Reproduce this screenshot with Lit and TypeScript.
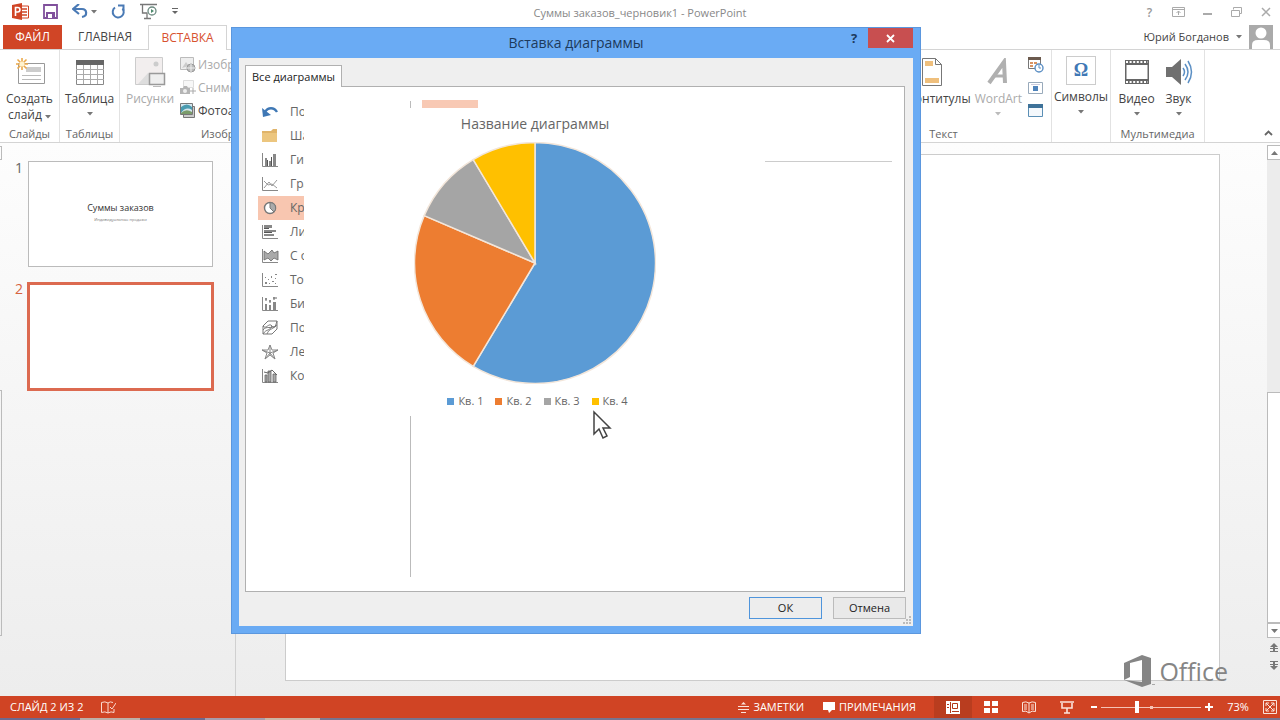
import { LitElement, html, css, svg } from "lit";
import { customElement, state } from "lit/decorators.js";

const chartTypes = [
  "Последние", "Шаблоны", "Гистограмма", "График", "Круговая", "Линейчатая",
  "С областями", "Точечная", "Биржевая", "Поверхность", "Лепестковая", "Комбинированная",
];

const series = [
  { name: "Кв. 1", value: 8.2, color: "#5b9bd5" },
  { name: "Кв. 2", value: 3.2, color: "#ed7d31" },
  { name: "Кв. 3", value: 1.4, color: "#a5a5a5" },
  { name: "Кв. 4", value: 1.2, color: "#ffc000" },
];

const axis = svg`<path d="M1.500 1v13.500H17" fill="none" stroke="#888"/>`;

const typeIcons = [
  svg`<path d="M4 8c3-5 9-5 12 0" fill="none" stroke="#3f78b5" stroke-width="2.400"/><path d="M1 4l1 9 8-2z" fill="#3f78b5"/>`,
  svg`<path d="M1 3h9l2-2h4v13H1z" fill="#e0b46a"/><path d="M1 5h15v9H1z" fill="#ecc67f"/>`,
  svg`${axis}<path d="M4 6h2v8H4zM8 9h2v5H8zM12 2h3v12h-3z" fill="#888"/><path d="M6 8h1v6H6zM10 5h1v9h-1z" fill="#555"/>`,
  svg`${axis}<path d="M3 12l5-6 3 4 5-6M3 5l4 4 4-1 5 4" fill="none" stroke="#999"/>`,
  svg`<circle cx="9" cy="8" r="5.500" fill="#fff" stroke="#777" stroke-width="1.400"/><path d="M9 2.500V8l4 4a5.500 5.500 0 0 0-4-9.500z" fill="#aaa" stroke="#777"/>`,
  svg`${axis}<path d="M3 1h8v3H3zM3 6h12v2H3zM3 10h10v2H3z" fill="#888"/><path d="M3 4h5v1H3zM3 8h8v1H3z" fill="#555"/>`,
  svg`${axis}<path d="M3 3l4 3 4-4 2 3 4-2v9l-4-2-3 3-3-3-4 2z" fill="#aaa" stroke="#666" stroke-width=".8"/>`,
  svg`${axis}<path d="M4 10h2v2H4zM7 7h1v1H7zM8 11h1v1H8zM10 4h1v2h-1zM11 9h2v1h-2zM14 2h2v1h-2zM14 6h1v1h-1zM4 5h1v1H4zM14 11h1v1h-1z" fill="#888"/>`,
  svg`${axis}<path d="M4 8h2v6H4zM8 9h2v5H8zM12 6h3v8h-3z" fill="#888"/><path d="M5 2v3M9 4v3M13 1v3M4 3h2M8 5h2M12 2h4" stroke="#666"/>`,
  svg`<path d="M2 6l5-5h9v8l-5 5H2zM2 6c3 4 6-4 9 0s4-2 5-5M2 14c4-6 6-2 9-8M2 10c4-5 7 0 14-5M6 14c2-5 4-4 9-8" fill="none" stroke="#777"/>`,
  svg`<path d="M9 1l2 5 6 0-5 3 2 6-5-4-5 4 2-6-5-3h6zM9 1v10M1 6l8 3 8-3M4 15l5-6 5 6" fill="none" stroke="#888"/>`,
  svg`${axis}<path d="M4 7h2v7H4zM7 3h3v11H7zM12 6h3v8h-3z" fill="#aaa" stroke="#666" stroke-width=".8"/><path d="M3 4l4 1 4-3 5 5" fill="none" stroke="#666"/>`,
];

const icon = (w: number, h: number, body: unknown) =>
  html`<svg width=${w} height=${h} viewBox="0 0 ${w} ${h}" aria-hidden="true">${body}</svg>`;

const caret = (color = "#777") => icon(6, 4, svg`<path d="M0 0h6L3 3.500z" fill=${color}/>`);

@customElement("insert-chart-dialog")
class InsertChartDialog extends LitElement {
  @state() selected = 4;

  static styles = css`
    :host {
      display: flex;
      flex-direction: column;
      box-sizing: border-box;
      padding: 0 7px 7px;
      border: 1px solid #5b97de;
      background: #6aabf4;
      font: 11px/16px "Open Sans", "Noto Sans", sans-serif;
      color: #222;
    }
    * { box-sizing: border-box; }
    button { font: inherit; color: inherit; padding: 0; border: 0; background: none; }
    .title {
      display: grid;
      grid-template-columns: 1fr auto 1fr;
      height: 30px;
      font-size: 14px;
      color: #1d3a5c;
    }
    h1 { margin: 0; font: inherit; line-height: 30px; }
    .tools { display: flex; justify-content: flex-end; align-items: flex-start; }
    .help { width: 28px; height: 20px; font-weight: 700; font-size: 13px; }
    .close { width: 45px; height: 20px; background: #c84f50; display: grid; place-items: center; }
    .body {
      flex: 1;
      display: flex;
      flex-direction: column;
      padding: 7px 7px 7px 6px;
      background: #efefef;
      position: relative;
    }
    .tab {
      align-self: flex-start;
      height: 22px;
      padding: 0 6px;
      border: 1px solid #b0b0b0;
      border-bottom: 0;
      background: #fff;
      margin-bottom: -1px;
      z-index: 1;
    }
    .panel {
      flex: 1;
      display: flex;
      align-items: stretch;
      padding: 13px 12px 14px;
      border: 1px solid #b0b0b0;
      background: #fff;
      margin-right: 1px;
    }
    .types { list-style: none; margin: 0; padding: 0; width: 46px; overflow: hidden; }
    .type {
      display: flex;
      align-items: center;
      gap: 11px;
      padding-left: 3px;
      width: 100%;
      height: 24px;
      font-size: 12px;
      color: #666;
      white-space: nowrap;
    }
    .type svg { flex: none; }
    .type.on { background: #f8c6b0; }
    .preview { width: 250px; margin-left: 106px; display: flex; flex-direction: column; }
    .subtypes { display: flex; align-items: center; gap: 11px; height: 8px; }
    .tick { width: 1px; height: 7px; background: #bbb; }
    .chip { width: 56px; height: 8px; background: #f8c9b4; }
    h2 {
      margin: 6px 0 8px;
      font: 14px/20px "Open Sans", sans-serif;
      color: #666;
      text-align: center;
    }
    .pie { align-self: center; }
    .legend { display: flex; justify-content: center; gap: 12px; margin: 9px 0 7px; padding-left: 5px; color: #666; }
    .key { display: flex; align-items: center; gap: 4px; }
    .swatch { width: 7px; height: 7px; }
    .rule { flex: 1; width: 1px; background: #bbb; }
    .side { flex: 1; padding: 61px 0 0 105px; }
    .line { height: 1px; background: #ccc; }
    .actions { display: flex; justify-content: flex-end; gap: 11px; padding-top: 5px; }
    .action { width: 73px; height: 22px; border: 1px solid #bbb; background: #e9e9e9; }
    .primary { border-color: #4f95dc; background: #ededed; }
    .grip { position: absolute; right: 1px; bottom: 1px; line-height: 9px; }
  `;

  pie() {
    const total = series.reduce((sum, s) => sum + s.value, 0);
    let angle = -Math.PI / 2;
    return series.map((s) => {
      const end = angle + (s.value / total) * Math.PI * 2;
      const at = (a: number) => `${121 + 120.5 * Math.cos(a)} ${121 + 120.5 * Math.sin(a)}`;
      const d = `M121 121L${at(angle)}A120.5 120.5 0 ${end - angle > Math.PI ? 1 : 0} 1 ${at(end)}Z`;
      angle = end;
      return svg`<path d=${d} fill=${s.color} stroke="#f3e6da" stroke-width="1.5"/>`;
    });
  }

  render() {
    return html`
      <div class="title">
        <span></span>
        <h1>Вставка диаграммы</h1>
        <div class="tools">
          <button class="help" aria-label="Справка">?</button>
          <button class="close" aria-label="Закрыть">
            ${icon(9, 9, svg`<path d="M1 1l7 7M8 1l-7 7" stroke="#fff" stroke-width="1.800"/>`)}
          </button>
        </div>
      </div>
      <div class="body">
        <button class="tab">Все диаграммы</button>
        <div class="panel">
          <ul class="types">
            ${chartTypes.map((name, i) => html`
              <li><button class="type ${i === this.selected ? "on" : ""}" @click=${() => (this.selected = i)}>
                ${icon(18, 16, typeIcons[i])}<span>${name}</span>
              </button></li>`)}
          </ul>
          <div class="preview">
            <div class="subtypes"><span class="tick"></span><span class="chip"></span></div>
            <h2>Название диаграммы</h2>
            <svg class="pie" width="242" height="242" viewBox="0 0 242 242" role="img" aria-label="Круговая диаграмма">${this.pie()}</svg>
            <div class="legend">
              ${series.map((s) => html`<span class="key"><span class="swatch" style="background:${s.color}"></span>${s.name}</span>`)}
            </div>
            <div class="rule"></div>
          </div>
          <div class="side"><div class="line"></div></div>
        </div>
        <div class="actions">
          <button class="action primary">ОК</button>
          <button class="action">Отмена</button>
        </div>
        <span class="grip">${icon(9, 9, svg`<path d="M6 0h2v2H6zM3 3h2v2H3zM6 3h2v2H6zM0 6h2v2H0zM3 6h2v2H3zM6 6h2v2H6z" fill="#bbb"/>`)}</span>
      </div>
    `;
  }
}

const big = {
  slide: icon(30, 30, svg`<path d="M3.500 6.500h26v20h-26z" fill="#fff" stroke="#999"/><path d="M11 10h15v5H11z" fill="#ccc"/><path d="M7 18.500h19M7 22.500h19" stroke="#bbb"/><path d="M7 1v12M1 7h12M2.500 2.500l9 9M11.500 2.500l-9 9" stroke="#eba94b" stroke-width="1.600"/><circle cx="7" cy="7" r="2.500" fill="#fff3cf"/>`),
  table: icon(30, 28, svg`<path d="M1.500 2.500h27v24h-27z" fill="#fff" stroke="#888"/><path d="M1 2h28v5H1z" fill="#666"/><path d="M8.500 7v19M15.500 7v19M22.500 7v19M1 11.500h28M1 16.500h28M1 21.500h28" stroke="#aaa"/>`),
  pictures: icon(32, 32, svg`<path d="M1.500 1.500h27v27h-27z" fill="#f2eeee" stroke="#ccc"/><path d="M4 28l10-11 5 5v6z" fill="#ddd"/><circle cx="22" cy="8" r="2.500" fill="#ccc"/><path d="M15.500 17.500h15v11h-15z" fill="#eee" stroke="#999" stroke-width="1.500"/><path d="M19 30.500h8" stroke="#bbb"/>`),
  footer: icon(22, 30, svg`<path d="M1.500 1.500h13l6 6v21h-19z" fill="#fff" stroke="#777"/><path d="M14.500 1.500v6h6" fill="none" stroke="#777"/><path d="M4 4h8v5H4zM4 21h14v5H4z" fill="#efbf7c"/>`),
  wordart: icon(24, 28, svg`<path d="M3 25L18 4l1 21" fill="none" stroke="#b0b0b0" stroke-width="4"/><path d="M8 18h11" stroke="#b0b0b0" stroke-width="3"/>`),
  omega: html`<span class="omega">Ω</span>`,
  video: icon(26, 26, svg`<path d="M1 1h24v24H1z" fill="#666"/><path d="M2.500 6h21v14h-21z" fill="#fff"/><path d="M2 3h22M2 23h22" stroke="#fff" stroke-width="2" stroke-dasharray="2 1.600"/>`),
  sound: icon(28, 28, svg`<path d="M1 9h6l9-8v26l-9-8H1z" fill="#707070"/><path d="M18 10q3 4 0 8M20 6q6 8 0 16M23 3q7 11 0 22" fill="none" stroke="#5b8fc4" stroke-width="1.500"/>`),
};

const small = {
  online: icon(17, 17, svg`<path d="M1.500 1.500h13v12h-13z" fill="#eee" stroke="#bbb"/><path d="M3 12l4-6 3 4z" fill="#ccc"/><circle cx="12" cy="12" r="4" fill="#bbb" stroke="#999"/><path d="M8 12h8M12 8v8" stroke="#eee"/>`),
  shot: icon(17, 17, svg`<path d="M4.500 1.500h10v7h-10z" fill="#f7f7f7" stroke="#ddd"/><path d="M1 9h3l1-2h3l1 2h2v6H1z" fill="#b5b5b5"/><circle cx="6" cy="12" r="2" fill="#eee"/><path d="M14 9v6M11 12h6" stroke="#aaa"/>`),
  album: icon(17, 17, svg`<path d="M4.500 4.500h11v11h-11z" fill="#ccc" stroke="#777"/><path d="M1.500 1.500h12v11h-12z" fill="#d5e6ee" stroke="#777"/><path d="M2 5q6-5 11 0v3q-6-4-11 3z" fill="#4a9bb0"/><path d="M2 11q5-5 11-1v2H2z" fill="#7b9c6b"/>`),
  date: icon(17, 17, svg`<path d="M1.500 1.500h12v11h-12z" fill="#fff" stroke="#777"/><path d="M1 1h13v3H1z" fill="#6b5a4e"/><path d="M3 6h3v2H3zM7 6h3v2H7zM3 9h3v2H3z" fill="#d99463"/><circle cx="12" cy="12" r="4" fill="#fff" stroke="#5b8fc4" stroke-width="1.400"/><path d="M12 9v3h2" fill="none" stroke="#5b8fc4"/>`),
  number: icon(17, 14, svg`<path d="M1.500 1.500h14v11h-14z" fill="#fff" stroke="#9ab"/><path d="M6 5h5v5H6z" fill="#4f83ba"/><path d="M4 3.500h9" stroke="#ccd"/>`),
  object: icon(17, 15, svg`<path d="M1.500 1.500h14v12h-14z" fill="#f4f8fc" stroke="#5b8fb5"/><path d="M1 1h15v4H1z" fill="#3e7299"/>`),
};

@customElement("app-root")
class AppRoot extends LitElement {
  @state() zoom = 35;

  static styles = css`
    :host {
      display: flex;
      flex-direction: column;
      position: relative;
      height: 100vh;
      overflow: hidden;
      background: #fff;
      font: 12px/16px "Open Sans", "Noto Sans", sans-serif;
      color: #444;
    }
    * { box-sizing: border-box; }
    svg { flex: none; }
    button {
      font: inherit;
      color: inherit;
      padding: 0;
      border: 0;
      background: none;
      white-space: nowrap;
    }
    .titlebar { display: grid; grid-template-columns: 1fr auto 1fr; height: 25px; color: #888; font-size: 11px; line-height: 25px; }
    .quick { display: flex; align-items: center; padding: 0 0 2px 12px; gap: 14px; }
    .quick button, .controls button { display: grid; place-items: center; }
    .quick .pair { display: flex; align-items: center; gap: 2px; }
    .controls { display: flex; justify-content: flex-end; }
    .controls button { width: 29px; height: 23px; font-size: 12px; font-weight: 600; color: #999; }
    .tabs { display: flex; height: 25px; padding-left: 3px; border-bottom: 1px solid #d4d4d4; font-size: 12px; }
    .file { width: 59px; background: #d04526; color: #fff; }
    .home { width: 86px; }
    .insert { width: 79px; height: 25px; border: 1px solid #d4d4d4; border-bottom: 0; background: #fff; color: #d7512f; }
    .user { margin-left: auto; display: flex; align-items: center; gap: 7px; padding-right: 7px; font-size: 11px; }
    .ribbon { display: flex; justify-content: space-between; height: 93px; border-bottom: 1px solid #d4d4d4; }
    .side { display: flex; }
    .group { display: flex; flex-direction: column; padding-top: 5px; }
    .group:not(.open) { border-right: 1px solid #e2e2e2; }
    .items { display: flex; height: 71px; justify-content: center; }
    .end { justify-content: flex-end; padding-right: 7px; }
    .caption { text-align: center; font-size: 11px; line-height: 16px; color: #666; }
    .big { display: flex; flex-direction: column; align-items: center; }
    .art { height: 34px; display: grid; place-items: center; margin-bottom: 2px; }
    .drop { height: 14px; display: flex; align-items: center; }
    .off { color: #aaa; }
    .wordart { margin: 0 5px 0 4px; }
    .wide { width: 42px; }
    .column { display: flex; flex-direction: column; gap: 6px; padding-top: 1px; }
    .tool { display: flex; align-items: center; gap: 2px; height: 17px; }
    .slides, .tables { width: 60px; }
    .images { width: 236px; }
    .images .items { justify-content: flex-start; padding-left: 6px; gap: 5px; }
    .text { width: 216px; }
    .symbols.group { width: 59px; padding-top: 3px; }
    .media { width: 94px; }
    .tail { width: 75px; display: flex; justify-content: flex-end; align-items: flex-end; padding: 0 7px 2px; }
    .omega { display: grid; place-items: center; width: 30px; height: 29px; border: 1px solid #ccc; color: #3f78b5; font: 700 18px/24px "Liberation Serif", serif; }
    .work { flex: 1; min-height: 0; display: flex; background: linear-gradient(#fdfdfd, #ededed); }
    .thumbs { width: 236px; display: flex; border-right: 1px solid #d0d0d0; }
    .strip { width: 2px; display: flex; flex-direction: column; justify-content: space-between; padding: 3px 0 60px; }
    .cap { height: 14px; border: 1px solid #bbb; border-left: 0; }
    .bar { height: 246px; border: 1px solid #bbb; border-left: 0; }
    .deck { flex: 1; list-style: none; margin: 0; padding: 18px 21px 0 13px; display: flex; flex-direction: column; gap: 15px; }
    .thumb { display: grid; grid-template-columns: 12px 1fr; font-size: 14px; line-height: 14px; color: #666; }
    .mini {
      height: 106px;
      border: 1px solid #bbb;
      margin: 0 1px;
      background: #fff;
      display: flex;
      flex-direction: column;
      align-items: center;
      padding-top: 39px;
      color: #333;
      font-size: 9px;
      line-height: 14px;
    }
    .mini small { font-size: 4px; line-height: 10px; color: #777; }
    .current { color: #d7633f; }
    .current .mini { height: 109px; margin: 0; border: 3px solid #dc6a50; }
    .stage { flex: 1; display: flex; padding: 11px 47px 15px 49px; }
    .slide { flex: 1; background: #fff; border: 1px solid #ccc; }
    .scroll { width: 13px; display: flex; flex-direction: column; padding-top: 2px; }
    .arrow { height: 15px; border: 1px solid #bbb; border-right: 0; background: #fff; display: grid; place-items: center; }
    .track { flex: 1; display: flex; flex-direction: column; background: #ececec; }
    .handle { height: 50%; margin-top: auto; border: 1px solid #bbb; border-right: 0; background: #fff; }
    .pagers { display: flex; flex-direction: column; align-items: center; gap: 8px; height: 58px; padding-top: 5px; }
    .pagers button { height: 10px; display: grid; }
    .status { display: flex; align-items: stretch; height: 22px; background: #d04424; color: #fff; font-size: 11px; line-height: 22px; }
    .status button, .pos, .fit { display: flex; align-items: center; justify-content: center; gap: 4px; }
    .pos { padding-left: 10px; gap: 18px; }
    .right { margin-left: auto; display: flex; align-items: stretch; }
    .notes { margin-right: 19px; }
    .comments { margin-right: 18px; }
    .view { width: 38px; }
    .view.on { background: #b93d1f; }
    .step { width: 15px; }
    .level { width: 44px; text-align: center; }
    .status .fit { width: 20px; }
    .zoom { width: 100px; height: 22px; margin: 0; appearance: none; background: linear-gradient(#f5c3b5, #f5c3b5) center / 100% 1px no-repeat, linear-gradient(#f5c3b5, #f5c3b5) center / 3px 3px no-repeat; }
    .zoom::-webkit-slider-thumb { appearance: none; width: 4px; height: 12px; background: #fff; }
    .desk { height: 2px; background: linear-gradient(90deg, #6d6a90 0 80px, #bdb0a8 80px 140px, #6d6a90 140px 205px, #a79cab 205px 265px, #cbb5a3 265px 320px, #77748f 320px); }
    insert-chart-dialog { position: absolute; left: 231px; top: 27px; width: 690px; height: 607px; }
    .logo { position: absolute; right: 52px; bottom: 31px; display: flex; align-items: center; gap: 4px; color: #858585; font-size: 25px; line-height: 36px; }
    .cursor { position: absolute; left: 592px; top: 410px; }
  `;

  bigButton(cls: string, art: unknown, label: unknown, drop: unknown = "") {
    return html`<button class="big ${cls}">
      <span class="art">${art}</span><span>${label}</span>${drop ? html`<span class="drop">${drop}</span>` : ""}
    </button>`;
  }

  render() {
    return html`
      <header class="titlebar">
        <div class="quick">
          ${icon(17, 17, svg`<path d="M9 3h7.500v12H9z" fill="#fff" stroke="#d04526"/><path d="M10 6h5M10 9h5M10 12h5" stroke="#d04526" stroke-width="1.500"/><path d="M0 2l10-2v17L0 15z" fill="#d04526"/><path d="M3.500 13V4.500h2.200a2 2 0 0 1 0 4.500H3.500" fill="none" stroke="#fff" stroke-width="1.600"/>`)}
          <button aria-label="Сохранить">${icon(15, 15, svg`<path d="M1 1h13v13H1z" fill="#fff" stroke="#80509c" stroke-width="1.800"/><path d="M3 8h9v6H3z" fill="#80509c"/><path d="M5 10h4v4H5z" fill="#fff"/>`)}</button>
          <span class="pair">
            <button aria-label="Отменить">${icon(17, 15, svg`<path d="M2 5h8c5 0 6 7 0 8" fill="none" stroke="#4a7ab5" stroke-width="2.200"/><path d="M7 0L1 5l6 5" fill="none" stroke="#4a7ab5" stroke-width="2.200"/>`)}</button>${caret()}
          </span>
          <button aria-label="Повторить">${icon(15, 15, svg`<path d="M4 3.500a5.500 5.500 0 1 0 7.500 1" fill="none" stroke="#4a7ab5" stroke-width="2"/><path d="M7 1.500h5.500v5" fill="none" stroke="#4a7ab5" stroke-width="2"/>`)}</button>
          <button aria-label="Начать показ">${icon(18, 17, svg`<path d="M0 1.500h17M2.500 2v8h5M7 10v5M4 15.500h7" fill="none" stroke="#777" stroke-width="1.300"/><circle cx="12" cy="8" r="4" fill="#fff" stroke="#6c8a80" stroke-width="1.300"/><path d="M11 6l3 2-3 2z" fill="#4d8a6c"/>`)}</button>
          <button aria-label="Настройка">${icon(6, 7, svg`<path d="M0 .5h6" stroke="#666"/><path d="M0 3h6L3 6z" fill="#666"/>`)}</button>
        </div>
        <span>Суммы заказов_черновик1 - PowerPoint</span>
        <div class="controls">
          <button aria-label="Справка">?</button>
          <button aria-label="Лента">${icon(13, 10, svg`<path d="M.5.5h12v9H.500zM.5 2.500h12M6.500 8V4M4.500 6l2-2 2 2" fill="none" stroke="#aaa"/>`)}</button>
          <button aria-label="Свернуть">${icon(9, 10, svg`<path d="M0 7h9" stroke="#aaa" stroke-width="2"/>`)}</button>
          <button aria-label="Окно">${icon(11, 10, svg`<path d="M2.500 2.500v-2h8v6h-2M.5 3.500h8v6h-8z" fill="none" stroke="#aaa"/>`)}</button>
          <button aria-label="Закрыть">${icon(10, 10, svg`<path d="M1 1l8 8M9 1L1 9" stroke="#aaa" stroke-width="1.500"/>`)}</button>
        </div>
      </header>
      <nav class="tabs">
        <button class="file">ФАЙЛ</button>
        <button class="home">ГЛАВНАЯ</button>
        <button class="insert">ВСТАВКА</button>
        <div class="user"><span>Юрий Богданов</span>${caret()}
          ${icon(24, 24, svg`<path d="M0 0h24v24H0z" fill="#aaa"/><circle cx="12" cy="8" r="5.500" fill="#fff"/><path d="M3 24v-4q0-5 6-5h6q6 0 6 5v4z" fill="#fff"/>`)}</div>
      </nav>
      <section class="ribbon">
        <div class="side">
          <div class="group slides">
            <div class="items"><button class="big"><span class="art">${big.slide}</span><span>Создать</span><span>слайд ${caret()}</span></button></div>
            <div class="caption">Слайды</div>
          </div>
          <div class="group tables">
            <div class="items">${this.bigButton("", big.table, "Таблица", caret())}</div>
            <div class="caption">Таблицы</div>
          </div>
          <div class="group images open">
            <div class="items">
              ${this.bigButton("off", big.pictures, "Рисунки")}
              <div class="column">
                <button class="tool off">${small.online}Изображения</button>
                <button class="tool off">${small.shot}Снимок</button>
                <button class="tool">${small.album}Фотоальбом</button>
              </div>
            </div>
            <div class="caption">Изображения</div>
          </div>
        </div>
        <div class="side">
          <div class="group text">
            <div class="items end">
              ${this.bigButton("", big.footer, "Колонтитулы")}
              ${this.bigButton("off wordart", big.wordart, "WordArt", caret("#bbb"))}
              <div class="column">
                <button class="tool" aria-label="Дата и время">${small.date}</button>
                <button class="tool" aria-label="Номер слайда">${small.number}</button>
                <button class="tool" aria-label="Объект">${small.object}</button>
              </div>
            </div>
            <div class="caption">Текст</div>
          </div>
          <div class="group symbols">
            <div class="items">${this.bigButton("", big.omega, "Символы", caret())}</div>
          </div>
          <div class="group media">
            <div class="items">
              ${this.bigButton("wide", big.video, "Видео", caret())}
              ${this.bigButton("wide", big.sound, "Звук", caret())}
            </div>
            <div class="caption">Мультимедиа</div>
          </div>
          <div class="tail"><button aria-label="Свернуть ленту">${icon(9, 6, svg`<path d="M1 5l3.500-3.500L8 5" fill="none" stroke="#666" stroke-width="1.800"/>`)}</button></div>
        </div>
      </section>
      <main class="work">
        <aside class="thumbs">
          <span class="strip"><span class="cap"></span><span class="bar"></span></span>
          <ol class="deck">
            <li class="thumb"><span>1</span><div class="mini">Суммы заказов<small>Индивидуальные продажи</small></div></li>
            <li class="thumb current"><span>2</span><div class="mini"></div></li>
          </ol>
        </aside>
        <div class="stage"><div class="slide"></div></div>
        <div class="scroll">
          <button class="arrow" aria-label="Вверх">${icon(7, 4, svg`<path d="M0 4h7L3.500 0z" fill="#777"/>`)}</button>
          <div class="track"><div class="handle"></div></div>
          <button class="arrow" aria-label="Вниз">${icon(7, 4, svg`<path d="M0 0h7L3.500 4z" fill="#777"/>`)}</button>
          <div class="pagers">
            <button aria-label="Предыдущий слайд">${icon(8, 10, svg`<path d="M0 4l4-4 4 4H5v1h3v1H5v2h3v1H0V8h3V6H0V5h3V4z" fill="#777"/>`)}</button>
            <button aria-label="Следующий слайд">${icon(8, 10, svg`<path d="M0 5l4 4 4-4H5V4h3V3H5V1h3V0H0v1h3v2H0v1h3v1z" fill="#777"/>`)}</button>
          </div>
        </div>
      </main>
      <footer class="status">
        <span class="pos">СЛАЙД 2 ИЗ 2 ${icon(15, 13, svg`<path d="M7 2v10M7 2Q4 0 .5 1.500v10Q4 10 7 12q3-2 6-.5V8M7 2q2-2 5-.5M9 6l2 2 4-6" fill="none" stroke="#f9d9cf"/>`)}</span>
        <div class="right">
          <button class="notes">${icon(12, 12, svg`<path d="M0 5.500h11M0 8.500h11M3 11.500h5" stroke="#fbe3db"/><path d="M3 3.500L5.500 1 8 3.500z" fill="#fbe3db"/>`)}ЗАМЕТКИ</button>
          <button class="comments">${icon(12, 12, svg`<path d="M0 1h12v8H9l-3 3-1-3H0z" fill="#fff"/>`)}ПРИМЕЧАНИЯ</button>
          <button class="view on" aria-label="Обычный">${icon(14, 13, svg`<path d="M0 0h14v13H0z" fill="#fff"/><path d="M4.500 1v11M6 10.500h7" stroke="#b23a1c"/><path d="M6.500 2.500h5v5h-5z" fill="none" stroke="#b23a1c"/><path d="M1 3.500h2M1 6.500h2" stroke="#b23a1c"/>`)}</button>
          <button class="view" aria-label="Сортировщик">${icon(14, 13, svg`<path d="M0 0h6v5H0zM8 0h6v5H8zM0 7h6v5H0zM8 7h6v5H8z" fill="#fff"/>`)}</button>
          <button class="view" aria-label="Чтение">${icon(14, 13, svg`<path d="M7 2v10M.5 1.500Q4 0 7 2q3-2 6.500-.5v9Q10 9 7 12 4 9 .5 10.500zM2 4h3M2 6h3M2 8h3M9 4h3M9 6h3M9 8h3" fill="none" stroke="#fbe3db"/>`)}</button>
          <button class="view" aria-label="Показ слайдов">${icon(14, 13, svg`<path d="M0 1h14M2 2v5h10V2M7 7v5M4 12h6" fill="none" stroke="#fbe3db" stroke-width="1.600"/>`)}</button>
          <button class="step" aria-label="Уменьшить">${icon(8, 8, svg`<path d="M1 4h6" stroke="#fff" stroke-width="2"/>`)}</button>
          <input class="zoom" type="range" min="0" max="100" aria-label="Масштаб" .value=${String(this.zoom)}
            @input=${(e: Event) => (this.zoom = Number((e.target as HTMLInputElement).value))} />
          <button class="step" aria-label="Увеличить">${icon(8, 8, svg`<path d="M0 4h8M4 0v8" stroke="#fff" stroke-width="2"/>`)}</button>
          <span class="level">73%</span>
          <button class="fit" aria-label="По размеру окна">${icon(14, 14, svg`<path d="M.5.5h13v13H.500zM3 6V3h3M8 3h3v3M11 8v3H8M6 11H3V8M3 3l8 8M11 3l-8 8" fill="none" stroke="#fbe3db"/>`)}</button>
        </div>
      </footer>
      <div class="desk"></div>
      <insert-chart-dialog role="dialog" aria-label="Вставка диаграммы"></insert-chart-dialog>
      <div class="logo">${icon(31, 34, svg`<path d="M0 9L18 1l9 3v26l-9 3L0 26l18 2V6L6 9v14l-6 3z" fill="#858585"/><path d="M28 30.500h3" stroke="#aaa"/>`)}<span>Office</span></div>
      <span class="cursor">${icon(20, 30, svg`<path d="M2 2v22l5-5 4 9 4-2-4-8h7z" fill="#fff" stroke="#444" stroke-width="1.500"/>`)}</span>
    `;
  }
}
